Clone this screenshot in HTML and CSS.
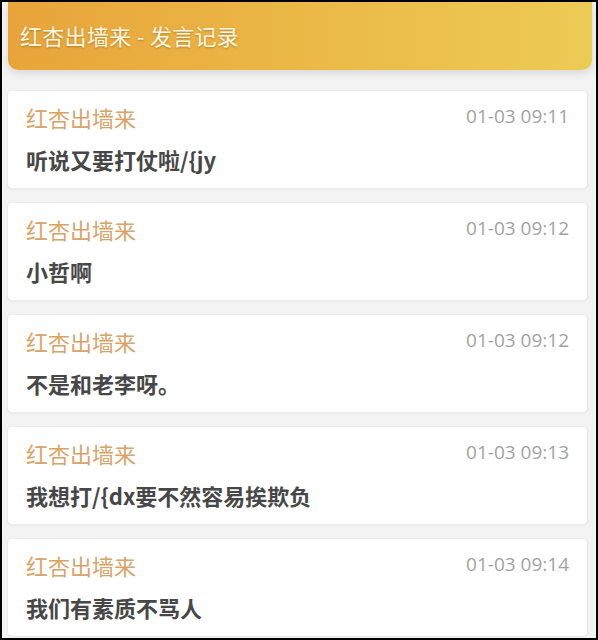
FILE: index.html
```html
<!DOCTYPE html>
<html lang="zh-CN">
<head>
<meta charset="utf-8">
<title>红杏出墙来 - 发言记录</title>
<link rel="stylesheet" href="styles.css">
</head>
<body>
<div class="frame">
  <header class="topbar">
    <h1 class="title">红杏出墙来 - 发言记录</h1>
  </header>
  <main class="list">
    <article class="card">
      <div class="row">
        <span class="name">红杏出墙来</span>
        <span class="time">01-03 09:11</span>
      </div>
      <p class="msg">听说又要打仗啦/{jy</p>
    </article>
    <article class="card">
      <div class="row">
        <span class="name">红杏出墙来</span>
        <span class="time">01-03 09:12</span>
      </div>
      <p class="msg">小哲啊</p>
    </article>
    <article class="card">
      <div class="row">
        <span class="name">红杏出墙来</span>
        <span class="time">01-03 09:12</span>
      </div>
      <p class="msg">不是和老李呀。</p>
    </article>
    <article class="card">
      <div class="row">
        <span class="name">红杏出墙来</span>
        <span class="time">01-03 09:13</span>
      </div>
      <p class="msg">我想打/{dx要不然容易挨欺负</p>
    </article>
    <article class="card">
      <div class="row">
        <span class="name">红杏出墙来</span>
        <span class="time">01-03 09:14</span>
      </div>
      <p class="msg">我们有素质不骂人</p>
    </article>
  </main>
</div>
</body>
</html>
```
FILE: styles.css
```css
* { box-sizing: border-box; }
html, body { margin: 0; padding: 0; background: #000; }
body {
  font-family: "Noto Sans CJK SC", "Open Sans", sans-serif;
}
.frame {
  width: 598px;
  height: 640px;
  border: 2px solid #000;
  background: #f3f3f3;
  overflow: hidden;
}
.topbar {
  margin: 0 4px 0 6px;
  height: 68px;
  border-radius: 0 0 10px 10px;
  background: linear-gradient(90deg, #e8a43a 0%, #ebb846 50%, #eccb55 100%);
  box-shadow: 0 3px 8px rgba(0,0,0,0.12);
  display: flex;
  align-items: center;
  padding-left: 12px;
}
.title {
  margin: 0 0 2px 0;
  font-size: 22px;
  font-weight: 400;
  color: #fff8e6;
  text-shadow: 0 1px 2px rgba(120,70,0,0.45);
  letter-spacing: 0.3px;
}
.list {
  display: flex;
  flex-direction: column;
  gap: 13px;
  margin: 20px 8px 0 5px;
}
.card {
  background: #fff;
  border-radius: 5px;
  border: 1px solid #ececec;
  box-shadow: 0 1px 2px rgba(0,0,0,0.04);
  height: 99px;
  padding: 11px 18px 0 18px;
  flex: none;
}
.row {
  display: flex;
  justify-content: space-between;
  align-items: flex-start;
}
.name {
  font-size: 22px;
  line-height: 30px;
  color: #d9a468;
}
.time {
  font-family: "Open Sans", "Noto Sans", sans-serif;
  font-size: 19px;
  line-height: 26px;
  margin-top: 1px;
  color: #a3a3a3;
}
.msg {
  margin: 12px 0 0 0;
  font-size: 22px;
  line-height: 30px;
  font-weight: 700;
  color: #474747;
}
```
